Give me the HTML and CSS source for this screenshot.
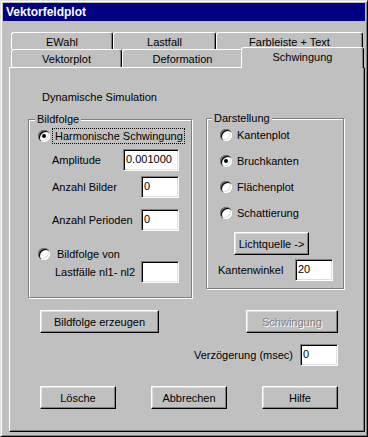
FILE: index.html
```html
<!DOCTYPE html>
<html>
<head>
  <title>Vektorfeldplot</title>
  <link rel="stylesheet" href="styles.css">
</head>
<body>
  <div class="window">
    <div class="titlebar">Vektorfeldplot</div>
    <div class="client">
      <div class="tabrow tabrow-back">
        <div class="tab tab-ewahl">EWahl</div>
        <div class="tab tab-lastfall">Lastfall</div>
        <div class="tab tab-farbe">Farbleiste + Text</div>
      </div>
      <div class="tabrow tabrow-front">
        <div class="tab tab-vektor">Vektorplot</div>
        <div class="tab tab-deform">Deformation</div>
        <div class="tab tab-schwing selected">Schwingung</div>
      </div>

      <div class="panel">
        <div class="heading">Dynamische Simulation</div>

        <div class="groups">
          <div class="group group-bild">
            <div class="legend">Bildfolge</div>
            <div class="radio-row first">
              <span class="radio checked"></span>
              <span class="radio-label focus">Harmonische Schwingung</span>
            </div>
            <div class="field-row amp">
              <label>Amplitude</label>
              <input type="text" class="edit edit-wide" value="0.001000">
            </div>
            <div class="field-row bilder">
              <label>Anzahl Bilder</label>
              <input type="text" class="edit" value="0">
            </div>
            <div class="field-row perioden">
              <label>Anzahl Perioden</label>
              <input type="text" class="edit" value="0">
            </div>
            <div class="radio-row second">
              <span class="radio"></span>
              <span class="radio-label">Bildfolge von</span>
            </div>
            <div class="field-row lastf">
              <label>Lastfälle nl1- nl2</label>
              <input type="text" class="edit" value="">
            </div>
          </div>

          <div class="group group-dar">
            <div class="legend">Darstellung</div>
            <div class="radio-row">
              <span class="radio"></span>
              <span class="radio-label">Kantenplot</span>
            </div>
            <div class="radio-row">
              <span class="radio checked"></span>
              <span class="radio-label">Bruchkanten</span>
            </div>
            <div class="radio-row">
              <span class="radio"></span>
              <span class="radio-label">Flächenplot</span>
            </div>
            <div class="radio-row">
              <span class="radio"></span>
              <span class="radio-label">Schattierung</span>
            </div>
            <button class="btn btn-licht">Lichtquelle -&gt;</button>
            <div class="field-row winkel">
              <label>Kantenwinkel</label>
              <input type="text" class="edit" value="20">
            </div>
          </div>
        </div>

        <div class="actions">
          <button class="btn btn-bildfolge">Bildfolge erzeugen</button>
          <button class="btn btn-schwing" disabled>Schwingung</button>
        </div>

        <div class="delay">
          <label>Verzögerung (msec)</label>
          <input type="text" class="edit" value="0">
        </div>

        <div class="buttons">
          <button class="btn btn-std">Lösche</button>
          <button class="btn btn-std">Abbrechen</button>
          <button class="btn btn-std">Hilfe</button>
        </div>
      </div>
    </div>
  </div>
</body>
</html>
```

FILE: styles.css
```css
body {
  margin: 0;
  padding: 0;
  background-color: #c0c0c0;
  font-family: "Liberation Sans", Arial, sans-serif;
  font-size: 11px;
  color: #000;
}

.window {
  width: 368px;
  height: 437px;
  box-sizing: border-box;
  padding: 2px;
  background-color: #c0c0c0;
  border: 1px solid;
  border-color: #dfdfdf #000 #000 #dfdfdf;
  box-shadow: inset 1px 1px 0 #fff, inset -1px -1px 0 #808080;
}

.titlebar {
  height: 18px;
  line-height: 18px;
  padding-left: 3px;
  background-color: #000080;
  color: #fff;
  font-weight: bold;
  font-size: 12px;
}

.client {
  padding-top: 11px;
  padding-left: 6px;
}

/* tabs */

.tabrow {
  display: flex;
  padding-left: 2px;
}

.tabrow-back {
  height: 17px;
}

.tabrow-front {
  height: 18px;
}

.tab {
  box-sizing: border-box;
  height: 100%;
  text-align: center;
  line-height: 15px;
  padding-top: 2px;
  white-space: nowrap;
  border-top: 1px solid #fff;
  border-left: 1px solid #fff;
  border-right: 1px solid #000;
  border-radius: 3px 3px 0 0;
  box-shadow: inset -1px 0 0 #808080;
  background-color: #c0c0c0;
}

.tab-ewahl { width: 102px; }
.tab-lastfall { width: 103px; }
.tab-farbe { width: 147px; }
.tab-vektor { width: 111px; }
.tab-deform { width: 121px; }

.tab-schwing {
  width: 123px;
}

.tab.selected {
  position: relative;
  z-index: 1;
  height: 21px;
  margin-top: -2px;
  margin-left: -2px;
  padding-top: 2px;
}

/* panel */

.panel {
  box-sizing: border-box;
  width: 356px;
  height: 365px;
  border-top: 1px solid #fff;
  border-left: 1px solid #fff;
  border-right: 1px solid #000;
  border-bottom: 1px solid #000;
  box-shadow: inset -1px -1px 0 #808080;
  white-space: nowrap;
}

.heading {
  margin-top: 23px;
  margin-left: 32px;
  line-height: 13px;
}

.groups {
  display: flex;
  align-items: flex-start;
  margin-top: 14px;
  margin-left: 18px;
}

.group {
  box-sizing: border-box;
  border: 1px solid #808080;
  box-shadow: inset 1px 1px 0 #fff, 1px 1px 0 #fff;
}

.legend {
  width: fit-content;
  margin-top: -7px;
  padding: 0 2px;
  line-height: 13px;
  background-color: #c0c0c0;
}

.group-bild {
  width: 164px;
  margin-top: 1px;
  padding: 0 12px 14px 9px;
}

.group-bild .legend {
  margin-left: -3px;
}

.group-dar {
  width: 138px;
  margin-left: 14px;
  padding: 0 10px 7px 13px;
}

.group-dar .legend {
  margin-left: -8px;
}

.radio-row {
  display: flex;
  align-items: center;
  height: 14px;
  margin-top: 12px;
}

.group-dar .legend + .radio-row {
  margin-top: 3px;
}

.radio {
  position: relative;
  flex: none;
  width: 12px;
  height: 12px;
  border-radius: 50%;
  background-color: #fff;
  box-shadow: inset 1px 1px 0 #808080, inset 2px 2px 0 #000, inset -1px -1px 0 #fff, inset -2px -2px 0 #dfdfdf;
}

.radio.checked::after {
  content: "";
  position: absolute;
  left: 4px;
  top: 4px;
  width: 4px;
  height: 4px;
  border-radius: 50%;
  background-color: #000;
}

.radio-label {
  margin-left: 5px;
  line-height: 13px;
}

.radio-row.first {
  height: 16px;
  margin-top: 2px;
}

.radio-label.focus {
  margin-left: 2px;
  padding: 0 1px 0 2px;
  border: 1px dotted #000;
  line-height: 14px;
}

.radio-row.second {
  margin-top: 16px;
}

.radio-row.second .radio-label {
  margin-left: 7px;
}

.field-row {
  display: flex;
  align-items: center;
  justify-content: space-between;
  height: 22px;
}

.field-row label {
  margin-left: 14px;
}

.field-row.amp { margin-top: 5px; }
.field-row.bilder { margin-top: 5px; }
.field-row.perioden { margin-top: 11px; }
.field-row.lastf { margin-top: 0; }
.field-row.lastf label { margin-left: 17px; }

.field-row.winkel {
  margin-top: 4px;
}

.field-row.winkel label {
  margin-left: -2px;
}

.edit {
  box-sizing: border-box;
  width: 38px;
  height: 22px;
  margin: 0;
  padding: 0 0 3px 2px;
  font-family: "Liberation Sans", Arial, sans-serif;
  font-size: 11px;
  color: #000;
  background-color: #fff;
  border: 1px solid;
  border-color: #808080 #fff #fff #808080;
  box-shadow: inset 1px 1px 0 #000, inset -1px -1px 0 #dfdfdf;
  outline: none;
}

.edit-wide {
  width: 56px;
}

/* buttons */

.btn {
  box-sizing: border-box;
  height: 23px;
  padding: 0;
  font-family: "Liberation Sans", Arial, sans-serif;
  font-size: 11px;
  color: #000;
  background-color: #c0c0c0;
  border: 1px solid;
  border-color: #fff #000 #000 #fff;
  box-shadow: inset -1px -1px 0 #808080, inset 1px 1px 0 #dfdfdf;
}

.btn:disabled {
  color: #808080;
  text-shadow: 1px 1px 0 #fff;
}

.btn-licht {
  display: block;
  width: 75px;
  margin-top: 12px;
  margin-left: 14px;
}

.btn-bildfolge { width: 119px; }
.btn-schwing { width: 92px; }
.btn-std { width: 76px; }

.actions,
.delay,
.buttons {
  display: flex;
  align-items: center;
  width: 298px;
  margin-left: 30px;
}

.actions {
  justify-content: space-between;
  margin-top: 12px;
}

.delay {
  justify-content: flex-end;
  margin-top: 11px;
}

.delay label {
  margin-right: 7px;
}

.buttons {
  justify-content: space-between;
  margin-top: 20px;
}
```
